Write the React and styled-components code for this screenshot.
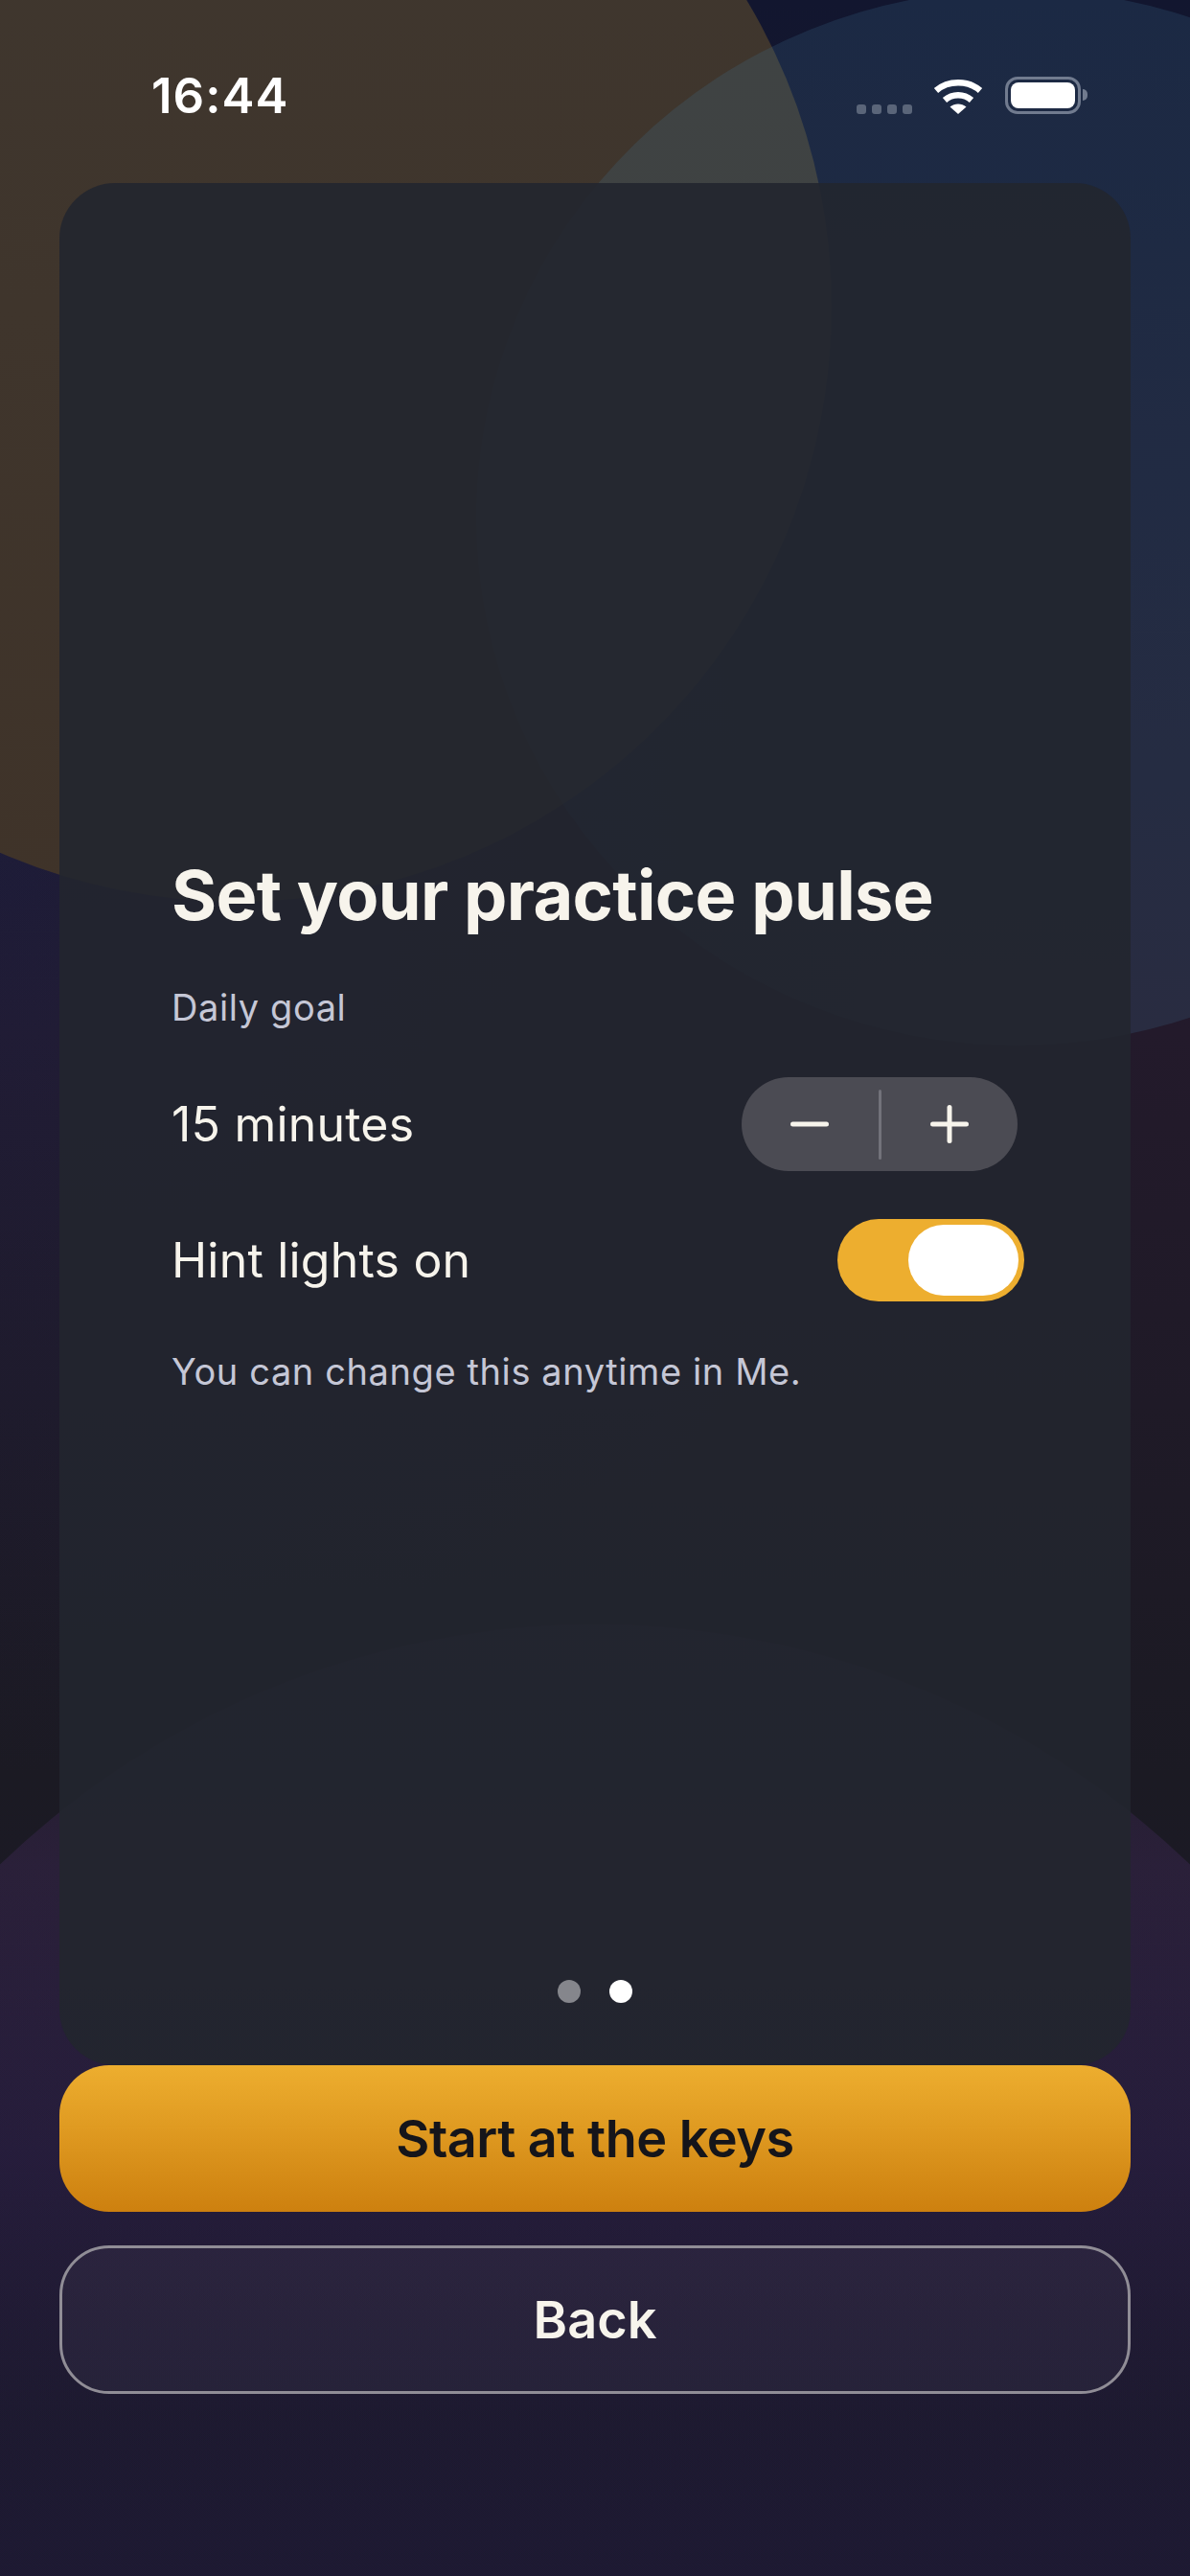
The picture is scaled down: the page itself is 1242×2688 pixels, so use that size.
import React from 'react';
import styled, { createGlobalStyle } from 'styled-components';

const GlobalStyle = createGlobalStyle`
  html, body {
    margin: 0;
    padding: 0;
    background: #1c1930;
  }
  * {
    box-sizing: border-box;
  }
`;

const Screen = styled.div`
  position: relative;
  width: 1242px;
  height: 2688px;
  overflow: hidden;
  display: flex;
  flex-direction: column;
  padding: 0 62px 190px;
  font-family: Inter, "Liberation Sans", sans-serif;
  background:
    radial-gradient(circle at 0 900px, rgba(24, 34, 84, 0.3), rgba(24, 34, 84, 0) 950px),
    linear-gradient(180deg, #12162f 0%, #231a2b 40%, #1b1a23 69%, #1c1930 100%);
`;

const Blob = styled.div`
  position: absolute;
  border-radius: 50%;
  left: ${(p) => p.$x - p.$rx}px;
  top: ${(p) => p.$y - p.$ry}px;
  width: ${(p) => p.$rx * 2}px;
  height: ${(p) => p.$ry * 2}px;
  background: ${(p) => p.$color};
`;

const StatusBar = styled.div`
  position: relative;
  height: 191px;
  flex: none;
  display: flex;
  align-items: flex-start;
  justify-content: space-between;
  padding: 70px 52px 0 96px;
`;

const Time = styled.div`
  color: #fff;
  font-size: 51px;
  line-height: 60px;
  font-weight: 600;
  letter-spacing: 1px;
`;

const StatusIcons = styled.div`
  display: flex;
  align-items: flex-end;
  margin-top: 10px;
`;

const Signal = styled.div`
  display: flex;
  gap: 6px;
  margin-right: 22px;
`;

const SignalDot = styled.span`
  width: 10px;
  height: 10px;
  border-radius: 3px;
  background: #5a6579;
`;

const Battery = styled.div`
  position: relative;
  width: 79px;
  height: 39px;
  margin-left: 23px;
  border: 3.5px solid #717b8f;
  border-radius: 13px;
  padding: 3px;

  &::before {
    content: '';
    display: block;
    height: 100%;
    border-radius: 8px;
    background: #fff;
  }

  &::after {
    content: '';
    position: absolute;
    right: -10px;
    top: 10px;
    width: 5px;
    height: 12px;
    border-radius: 0 5px 5px 0;
    background: #717b8f;
  }
`;

const Card = styled.section`
  position: relative;
  flex: 1;
  display: flex;
  flex-direction: column;
  padding: 699px 118px 65px 117px;
  border-radius: 58px;
  background: rgba(34, 38, 47, 0.9);
`;

const Title = styled.h1`
  margin: 0;
  color: #f7f4ec;
  font-size: 72px;
  line-height: 88px;
  font-weight: 700;
  letter-spacing: -0.65px;
`;

const Label = styled.div`
  margin-top: ${(p) => p.$top}px;
  color: #c5c7d6;
  font-size: 38px;
  line-height: 46px;
  letter-spacing: 0.6px;
`;

const Row = styled.div`
  display: flex;
  align-items: center;
  justify-content: space-between;
  margin-top: ${(p) => p.$top}px;
`;

const RowText = styled.span`
  color: #f7f4ec;
  font-size: 50px;
  line-height: 60px;
  letter-spacing: 0.2px;
`;

const Stepper = styled.div`
  display: flex;
  align-items: center;
  width: 288px;
  height: 98px;
  border-radius: 49px;
  background: #4b4b53;
`;

const StepButton = styled.div`
  flex: 1;
  display: flex;
  align-items: center;
  justify-content: center;
`;

const StepDivider = styled.div`
  width: 3px;
  height: 73px;
  border-radius: 2px;
  background: #72727a;
`;

const Toggle = styled.div`
  display: flex;
  align-items: center;
  justify-content: flex-end;
  width: 195px;
  height: 86px;
  margin-right: -7px;
  padding: 0 6px;
  border-radius: 43px;
  background: #edae2f;
`;

const Thumb = styled.div`
  width: 115px;
  height: 74px;
  border-radius: 37px;
  background: #fff;
`;

const Dots = styled.div`
  display: flex;
  justify-content: center;
  gap: 30px;
  margin-top: auto;
`;

const Dot = styled.span`
  width: 24px;
  height: 24px;
  border-radius: 50%;
  background: ${(p) => (p.$active ? '#fff' : '#85868c')};
`;

const PrimaryButton = styled.button`
  position: relative;
  flex: none;
  height: 153px;
  border: none;
  border-radius: 52px;
  font-family: inherit;
  font-size: 54px;
  font-weight: 600;
  letter-spacing: -0.5px;
  color: #15151a;
  background: linear-gradient(180deg, #edae2f 0%, #cd800f 100%);
`;

const SecondaryButton = styled.button`
  position: relative;
  flex: none;
  height: 155px;
  margin-top: 35px;
  border: 3px solid #908d96;
  border-radius: 52px;
  font-family: inherit;
  font-size: 54px;
  font-weight: 600;
  color: #f7f4ec;
  background: rgba(255, 255, 255, 0.04);
`;

const WifiIcon = () => (
  <svg width="52" height="38" viewBox="0 0 52 38" fill="none">
    <path d="M3 13.5C15.5 2.5 36.5 2.5 49 13.5" stroke="#fff" strokeWidth="6.5" />
    <path d="M12 23.5C20 16.5 32 16.5 40 23.5" stroke="#fff" strokeWidth="6.5" />
    <path d="M17.5 30.5C22.5 26.5 29.5 26.5 34.5 30.5L26 38Z" fill="#fff" />
  </svg>
);

const MinusIcon = () => (
  <svg width="40" height="40" viewBox="0 0 40 40">
    <rect x="0" y="17.5" width="40" height="5" rx="2.5" fill="#f7f4ec" />
  </svg>
);

const PlusIcon = () => (
  <svg width="40" height="40" viewBox="0 0 40 40">
    <rect x="0" y="17.5" width="40" height="5" rx="2.5" fill="#f7f4ec" />
    <rect x="17.5" y="0" width="5" height="40" rx="2.5" fill="#f7f4ec" />
  </svg>
);

export default function App() {
  return (
    <>
      <GlobalStyle />
      <Screen>
        <Blob $x={247} $y={320} $rx={621} $ry={621} $color="linear-gradient(180deg, #3f372f 0%, #3f3329 100%)" />
        <Blob $x={1061} $y={540} $rx={564} $ry={551} $color="rgba(63, 122, 157, 0.2)" />
        <Blob
          $x={621}
          $y={2590}
          $rx={895}
          $ry={895}
          $color="linear-gradient(180deg, rgba(102, 56, 140, 0.14) 8%, rgba(102, 56, 140, 0.2) 14%, rgba(78, 41, 131, 0.2) 31%, rgba(78, 41, 131, 0.03) 46%)"
        />

        <StatusBar>
          <Time>16:44</Time>
          <StatusIcons>
            <Signal>
              <SignalDot />
              <SignalDot />
              <SignalDot />
              <SignalDot />
            </Signal>
            <WifiIcon />
            <Battery />
          </StatusIcons>
        </StatusBar>

        <Card>
          <Title>Set your practice pulse</Title>
          <Label $top={50}>Daily goal</Label>
          <Row $top={50}>
            <RowText>15 minutes</RowText>
            <Stepper>
              <StepButton><MinusIcon /></StepButton>
              <StepDivider />
              <StepButton><PlusIcon /></StepButton>
            </Stepper>
          </Row>
          <Row $top={50}>
            <RowText>Hint lights on</RowText>
            <Toggle><Thumb /></Toggle>
          </Row>
          <Label $top={50}>You can change this anytime in Me.</Label>
          <Dots>
            <Dot />
            <Dot $active />
          </Dots>
        </Card>

        <PrimaryButton>Start at the keys</PrimaryButton>
        <SecondaryButton>Back</SecondaryButton>
      </Screen>
    </>
  );
}
